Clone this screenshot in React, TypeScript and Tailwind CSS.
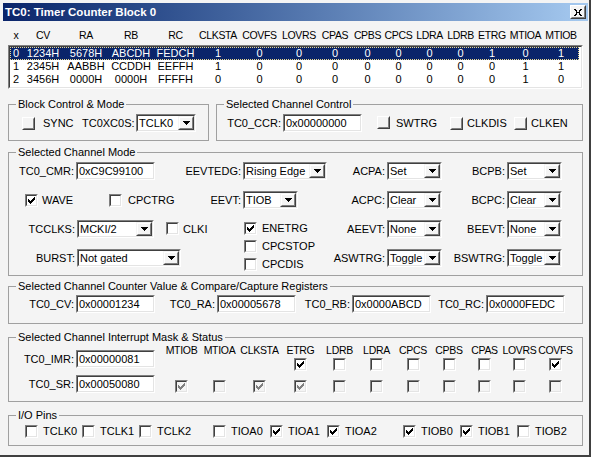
import React from "react";

// Classic Win32-style dialog: TC0 timer counter block viewer

const LIST_COLS =
  "grid grid-cols-[12px_42px_44px_46px_43px_42px_41px_38px_34px_31px_31px_31px_31px_32px_35px_36px]";
const IRQ_COLS =
  "grid grid-cols-[37px_39px_41px_41px_37px_37px_36px_36px_35px_35px_37px]";

const listHeaders = ["x", "CV", "RA", "RB", "RC", "CLKSTA", "COVFS", "LOVRS", "CPAS", "CPBS", "CPCS", "LDRA", "LDRB", "ETRG", "MTIOA", "MTIOB"];
const listRows = [
  ["0", "1234H", "5678H", "ABCDH", "FEDCH", "1", "0", "0", "0", "0", "0", "0", "0", "1", "0", "1"],
  ["1", "2345H", "AABBH", "CCDDH", "EEFFH", "1", "0", "0", "0", "0", "0", "0", "0", "0", "1", "1"],
  ["2", "3456H", "0000H", "0000H", "FFFFH", "0", "0", "0", "0", "0", "0", "0", "0", "0", "1", "0"],
];

const irqNames = ["MTIOB", "MTIOA", "CLKSTA", "ETRG", "LDRB", "LDRA", "CPCS", "CPBS", "CPAS", "LOVRS", "COVFS"];
const imrBits: (boolean | null)[] = [null, null, null, true, false, false, false, false, false, false, true];
const srBits = [true, false, true, true, false, false, false, false, false, false, false];

const pins: { name: string; on: boolean }[][] = [
  [{ name: "TCLK0", on: false }, { name: "TCLK1", on: false }, { name: "TCLK2", on: false }],
  [{ name: "TIOA0", on: false }, { name: "TIOA1", on: true }, { name: "TIOA2", on: true }],
  [{ name: "TIOB0", on: true }, { name: "TIOB1", on: true }, { name: "TIOB2", on: false }],
];

function Tick({ dim }: { dim?: boolean }) {
  return (
    <svg width="7" height="7" viewBox="0 0 7 7" shapeRendering="crispEdges">
      <path
        d="M0 2h1v3h-1zM1 3h1v3h-1zM2 4h1v3h-1zM3 3h1v3h-1zM4 2h1v3h-1zM5 1h1v3h-1zM6 0h1v3h-1z"
        fill={dim ? "#808080" : "#000"}
      />
    </svg>
  );
}

function Check({ on = false, dim = false }: { on?: boolean; dim?: boolean }) {
  return (
    <span className="inline-flex w-[13px] h-[13px] shrink-0 border border-t-[#808080] border-l-[#808080] border-r-white border-b-white">
      <span
        className={`flex-1 flex items-center justify-center border border-t-[#404040] border-l-[#404040] border-r-[#e4e4e4] border-b-[#e4e4e4] ${
          dim ? "bg-[#f4f4f4]" : "bg-white"
        }`}
      >
        {on && <Tick dim={dim} />}
      </span>
    </span>
  );
}

function PushCheck() {
  return (
    <span className="inline-flex w-[13px] h-[13px] shrink-0 border border-t-white border-l-white border-r-[#404040] border-b-[#404040]">
      <span className="flex-1 border border-t-transparent border-l-transparent border-r-[#808080] border-b-[#808080]" />
    </span>
  );
}

function Sunken({ className, children }: { className: string; children: React.ReactNode }) {
  return (
    <span className={`flex h-[18px] shrink-0 border border-t-[#808080] border-l-[#808080] border-r-white border-b-white ${className}`}>
      <span className="flex flex-1 min-w-0 border border-t-[#404040] border-l-[#404040] border-r-[#e4e4e4] border-b-[#e4e4e4] bg-white">
        {children}
      </span>
    </span>
  );
}

function Edit({ value, className }: { value: string; className: string }) {
  return (
    <Sunken className={className}>
      <span className="pl-[1px] leading-[14px] whitespace-nowrap">{value}</span>
    </Sunken>
  );
}

function Combo({ value, className }: { value: string; className: string }) {
  return (
    <Sunken className={className}>
      <span className="flex-1 pl-[1px] leading-[14px] whitespace-nowrap overflow-hidden">{value}</span>
      <span className="flex w-[16px] shrink-0 border border-t-[#f4f4f4] border-l-[#f4f4f4] border-r-[#404040] border-b-[#404040]">
        <span className="flex flex-1 items-center justify-center bg-[#f4f4f4] border border-t-white border-l-white border-r-[#808080] border-b-[#808080]">
          <svg width="7" height="4" viewBox="0 0 7 4" shapeRendering="crispEdges">
            <path d="M0 0h7v1h-7zM1 1h5v1h-5zM2 2h3v1h-3zM3 3h1v1h-1z" fill="#000" />
          </svg>
        </span>
      </span>
    </Sunken>
  );
}

function Label({ className, children }: { className: string; children: React.ReactNode }) {
  return <span className={`shrink-0 text-right whitespace-nowrap ${className}`}>{children}</span>;
}

function Group({ title, className = "", children }: { title: string; className?: string; children: React.ReactNode }) {
  return (
    <fieldset className={`min-w-0 border border-[#a0a0a0] ${className}`}>
      <legend className="ml-[7px] px-[2px] leading-[13px] whitespace-nowrap">{title}</legend>
      {children}
    </fieldset>
  );
}

// ACPx / BCPx column pair on the right side of the mode group
function RightPair({ a, av, b, bv }: { a: string; av: string; b: string; bv: string }) {
  return (
    <>
      <Label className="w-[58px]">{a}</Label>
      <Combo value={av} className="ml-[2px] w-[55px]" />
      <Label className="w-[63px]">{b}</Label>
      <Combo value={bv} className="ml-[2px] w-[55px]" />
    </>
  );
}

export default function App() {
  return (
    <div className="w-[591px] h-[457px] overflow-hidden flex flex-col bg-[#f4f4f4] text-black text-[11px] leading-[13px] font-['Liberation_Sans',Arial,sans-serif] pt-[3px] pl-[3px] pr-[1px] border-r-2 border-b-2 border-[#404040]">
      {/* title bar */}
      <div className="flex items-center h-[18px] shrink-0 bg-linear-to-r from-[#0a246a] to-[#a6caf0]">
        <span className="pl-[2px] flex-1 text-white font-bold text-[11.5px]">TC0: Timer Counter Block 0</span>
        <span className="mr-[2px] flex w-[16px] h-[14px] border border-t-white border-l-white border-r-[#404040] border-b-[#404040] bg-[#f4f4f4]">
          <span className="flex flex-1 items-center justify-center border border-t-transparent border-l-transparent border-r-[#808080] border-b-[#808080]">
            <svg width="8" height="7" viewBox="0 0 8 7" shapeRendering="crispEdges">
              <path d="M0 0h2v1h-2zM1 1h2v1h-2zM2 2h1v1h-1zM3 3h2v1h-2zM2 4h1v1h-1zM1 5h2v1h-2zM0 6h2v1h-2zM6 0h2v1h-2zM5 1h2v1h-2zM5 2h1v1h-1zM5 4h1v1h-1zM5 5h2v1h-2zM6 6h2v1h-2zM2 3h1v1h-1zM5 3h1v1h-1z" fill="#000" />
            </svg>
          </span>
        </span>
      </div>

      <div className="flex flex-col px-[5px]">
        {/* channel list */}
        <div className={`${LIST_COLS} ml-[2px] mt-[7px] h-[14px] items-center text-[10.5px] tracking-[-0.35px]`}>
          {listHeaders.map((h) => (
            <span key={h} className="flex justify-center whitespace-nowrap">{h}</span>
          ))}
        </div>
        <div className="mt-[3px] h-[44px] border border-t-[#808080] border-l-[#808080] border-r-white border-b-white">
          <div className="h-full border border-t-[#404040] border-l-[#404040] border-r-[#e4e4e4] border-b-[#e4e4e4] bg-white">
            {listRows.map((r, i) => (
              <div
                key={i}
                className={`${LIST_COLS} w-[569px] h-[13px] items-center ${
                  i === 0 ? "bg-[#0a246a] text-white outline-1 outline-dotted outline-[#e8d890] outline-offset-[-1px]" : ""
                }`}
              >
                {r.map((v, j) => (
                  <span key={j} className="flex justify-center whitespace-nowrap">{v}</span>
                ))}
              </div>
            ))}
          </div>
        </div>

        {/* block control + channel control */}
        <div className="flex gap-[7px] mt-[9px]">
          <Group title="Block Control & Mode" className="w-[201px]">
            <div className="flex items-center h-[18px] mt-[3px] mb-[8px] pl-[13px]">
              <PushCheck />
              <span className="ml-[8px] w-[39px]">SYNC</span>
              <Label className="w-[52px]">TC0XC0S:</Label>
              <Combo value="TCLK0" className="ml-[2px] w-[60px]" />
            </div>
          </Group>
          <Group title="Selected Channel Control" className="flex-1">
            <div className="flex items-center h-[18px] mt-[3px] mb-[8px]">
              <Label className="w-[64px]">TC0_CCR:</Label>
              <Edit value="0x00000000" className="ml-[2px] w-[79px]" />
              <span className="ml-[15px]"><PushCheck /></span>
              <span className="ml-[6px] w-[54px]">SWTRG</span>
              <PushCheck />
              <span className="ml-[4px] w-[47px]">CLKDIS</span>
              <PushCheck />
              <span className="ml-[4px]">CLKEN</span>
            </div>
          </Group>
        </div>

        {/* channel mode */}
        <Group title="Selected Channel Mode" className="mt-[5px]">
          <div className="flex items-center h-[20px] mt-[2px]">
            <Label className="w-[65px]">TC0_CMR:</Label>
            <Edit value="0xC9C99100" className="ml-[2px] w-[79px]" />
            <Label className="w-[86px]">EEVTEDG:</Label>
            <Combo value="Rising Edge" className="ml-[2px] w-[84px]" />
            <RightPair a="ACPA:" av="Set" b="BCPB:" bv="Set" />
          </div>
          <div className="flex items-center h-[20px] mt-[9px] pl-[16px]">
            <Check on />
            <span className="ml-[4px] w-[67px]">WAVE</span>
            <Check />
            <span className="ml-[6px] w-[50px]">CPCTRG</span>
            <Label className="w-[63px]">EEVT:</Label>
            <Combo value="TIOB" className="ml-[2px] w-[55px]" />
            <span className="w-[29px] shrink-0" />
            <RightPair a="ACPC:" av="Clear" b="BCPC:" bv="Clear" />
          </div>
          <div className="flex items-start mt-[9px] pb-[2px]">
            <div className="flex flex-col w-[234px] shrink-0">
              <div className="flex items-center h-[20px]">
                <Label className="w-[66px]">TCCLKS:</Label>
                <Combo value="MCKI/2" className="ml-[2px] w-[77px]" />
                <span className="ml-[12px]"><Check /></span>
                <span className="ml-[4px]">CLKI</span>
              </div>
              <div className="flex items-center h-[20px] mt-[9px]">
                <Label className="w-[66px]">BURST:</Label>
                <Combo value="Not gated" className="ml-[2px] w-[104px]" />
              </div>
            </div>
            <div className="flex flex-col w-[84px] shrink-0 pl-[1px]">
              {[
                { t: "ENETRG", on: true },
                { t: "CPCSTOP", on: false },
                { t: "CPCDIS", on: false },
              ].map((c) => (
                <div key={c.t} className="flex items-center h-[18px]">
                  <Check on={c.on} />
                  <span className="ml-[5px]">{c.t}</span>
                </div>
              ))}
            </div>
            <div className="flex flex-col">
              <div className="flex items-center h-[20px]">
                <RightPair a="AEEVT:" av="None" b="BEEVT:" bv="None" />
              </div>
              <div className="flex items-center h-[20px] mt-[9px]">
                <RightPair a="ASWTRG:" av="Toggle" b="BSWTRG:" bv="Toggle" />
              </div>
            </div>
          </div>
        </Group>

        {/* counter value & compare registers */}
        <Group title="Selected Channel Counter Value & Compare/Capture Registers" className="mt-[4px]">
          <div className="flex items-center h-[18px] mt-[2px] mb-[10px]">
            <Label className="w-[65px]">TC0_CV:</Label>
            <Edit value="0x00001234" className="ml-[2px] w-[79px]" />
            <Label className="w-[60px]">TC0_RA:</Label>
            <Edit value="0x00005678" className="ml-[2px] w-[79px]" />
            <Label className="w-[54px]">TC0_RB:</Label>
            <Edit value="0x0000ABCD" className="ml-[2px] w-[79px]" />
            <Label className="w-[53px]">TC0_RC:</Label>
            <Edit value="0x0000FEDC" className="ml-[2px] w-[79px]" />
          </div>
        </Group>

        {/* interrupt mask & status */}
        <Group title="Selected Channel Interrupt Mask & Status" className="mt-[7px]">
          <div className="flex items-start pb-[8px]">
            <div className="flex flex-col w-[154px] shrink-0 pt-[6px]">
              <div className="flex items-center h-[18px]">
                <Label className="w-[65px]">TC0_IMR:</Label>
                <Edit value="0x00000081" className="ml-[2px] w-[79px]" />
              </div>
              <div className="flex items-center h-[18px] mt-[7px]">
                <Label className="w-[65px]">TC0_SR:</Label>
                <Edit value="0x00050080" className="ml-[2px] w-[79px]" />
              </div>
            </div>
            <div className="flex flex-col">
              <div className={`${IRQ_COLS} h-[13px] items-center text-[10.5px] tracking-[-0.3px]`}>
                {irqNames.map((n) => (
                  <span key={n} className="flex justify-center whitespace-nowrap">{n}</span>
                ))}
              </div>
              <div className={`${IRQ_COLS} h-[13px] mt-[1px]`}>
                {imrBits.map((b, i) => (
                  <span key={i} className="flex justify-center">
                    {b !== null && <Check on={b} />}
                  </span>
                ))}
              </div>
              <div className={`${IRQ_COLS} h-[13px] mt-[9px]`}>
                {srBits.map((b, i) => (
                  <span key={i} className="flex justify-center">
                    <Check on={b} dim />
                  </span>
                ))}
              </div>
            </div>
          </div>
        </Group>

        {/* I/O pins */}
        <Group title="I/O Pins" className="mt-[7px]">
          <div className="flex items-center h-[13px] mt-[3px] mb-[7px] pl-[16px]">
            {pins.map((grp, gi) => (
              <div key={gi} className={`flex ${gi === 1 ? "ml-[17px]" : gi === 2 ? "ml-[19px]" : ""}`}>
                {grp.map((p) => (
                  <div key={p.name} className="flex items-center w-[57px]">
                    <Check on={p.on} />
                    <span className="ml-[5px]">{p.name}</span>
                  </div>
                ))}
              </div>
            ))}
          </div>
        </Group>
      </div>
    </div>
  );
}
